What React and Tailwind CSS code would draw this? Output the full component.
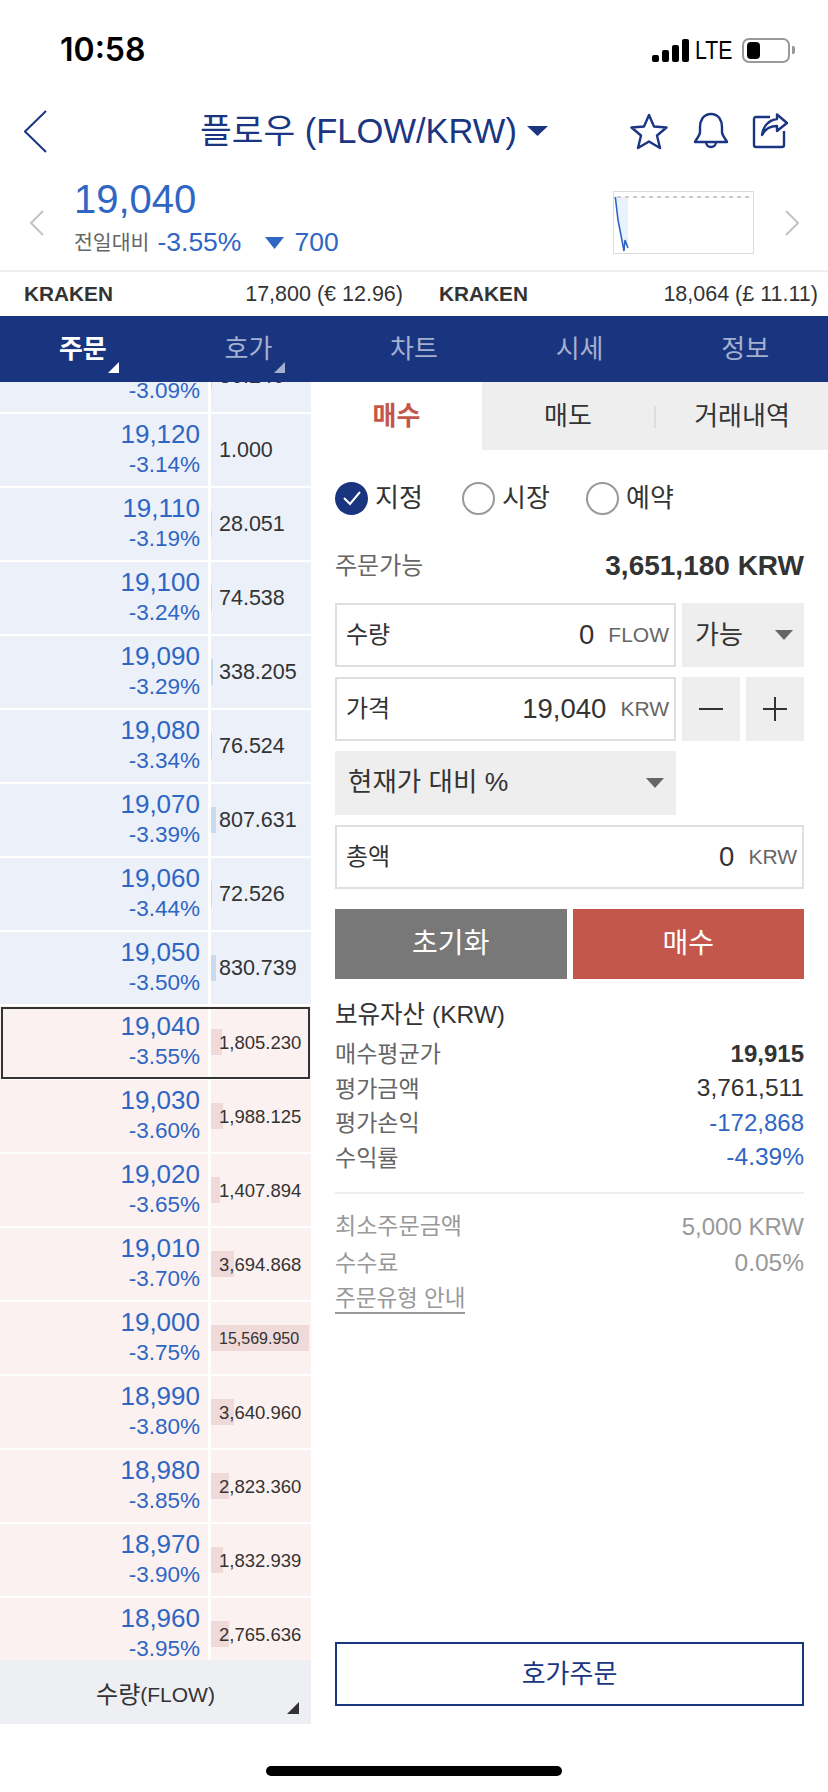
const askRows = [
  { price: '19,130', pct: '-3.09%', qty: '86.240', bar: 1 },
  { price: '19,120', pct: '-3.14%', qty: '1.000', bar: 0 },
  { price: '19,110', pct: '-3.19%', qty: '28.051', bar: 1 },
  { price: '19,100', pct: '-3.24%', qty: '74.538', bar: 1 },
  { price: '19,090', pct: '-3.29%', qty: '338.205', bar: 2 },
  { price: '19,080', pct: '-3.34%', qty: '76.524', bar: 1 },
  { price: '19,070', pct: '-3.39%', qty: '807.631', bar: 5 },
  { price: '19,060', pct: '-3.44%', qty: '72.526', bar: 1 },
  { price: '19,050', pct: '-3.50%', qty: '830.739', bar: 5 },
];

const bidRows = [
  { price: '19,040', pct: '-3.55%', qty: '1,805.230', bar: 11, current: true },
  { price: '19,030', pct: '-3.60%', qty: '1,988.125', bar: 12 },
  { price: '19,020', pct: '-3.65%', qty: '1,407.894', bar: 9 },
  { price: '19,010', pct: '-3.70%', qty: '3,694.868', bar: 23 },
  { price: '19,000', pct: '-3.75%', qty: '15,569.950', bar: 98 },
  { price: '18,990', pct: '-3.80%', qty: '3,640.960', bar: 23 },
  { price: '18,980', pct: '-3.85%', qty: '2,823.360', bar: 18 },
  { price: '18,970', pct: '-3.90%', qty: '1,832.939', bar: 12 },
  { price: '18,960', pct: '-3.95%', qty: '2,765.636', bar: 18 },
];

const tabs = ['주문', '호가', '차트', '시세', '정보'];

const Caret = ({ w = 18, h = 10, color = '#666666' }) => (
  <svg width={w} height={h} viewBox={`0 0 ${w} ${h}`} className="shrink-0">
    <polygon points={`0,0 ${w},0 ${w / 2},${h}`} fill={color} />
  </svg>
);

const Chevron = ({ dir = 'left', w = 14, h = 26, color = '#c4c4c4', stroke = 2 }) => (
  <svg width={w} height={h} viewBox={`0 0 ${w} ${h}`} fill="none" className="shrink-0">
    <polyline
      points={dir === 'left' ? `${w - 1},1 1,${h / 2} ${w - 1},${h - 1}` : `1,1 ${w - 1},${h / 2} 1,${h - 1}`}
      stroke={color}
      strokeWidth={stroke}
    />
  </svg>
);

const Corner = ({ color, className }) => (
  <svg width="11" height="11" viewBox="0 0 11 11" className={className}>
    <polygon points="11,0 11,11 0,11" fill={color} />
  </svg>
);

const OrderRow = ({ row, side }) => {
  const cellBg = side === 'ask' ? 'bg-[#ebf0f9]' : 'bg-[#fbf1f0]';
  const barBg = side === 'ask' ? 'bg-[#cbdbef]' : 'bg-[#f0d9d9]';
  const qtySize = row.qty.length > 9 ? 'text-[16px]' : row.qty.length > 7 ? 'text-[18.5px]' : 'text-[21.5px]';

  return (
    <div className="relative flex h-[72px] shrink-0 gap-[3px]">
      <div className={`flex w-[208px] flex-col items-end pt-[5px] pr-[8px] text-[#2f66c4] ${cellBg}`}>
        <div className="text-[26px] leading-[30px]">{row.price}</div>
        <div className="pt-[1px] text-[22.5px] leading-[30px]">{row.pct}</div>
      </div>
      <div className={`relative w-[100px] ${cellBg}`}>
        {row.bar > 0 && (
          <div className={`absolute top-[23px] left-0 h-[26px] ${barBg}`} style={{ width: row.bar }} />
        )}
        <div className={`relative flex h-full items-center pt-[1px] pl-[8px] text-[#333333] ${qtySize}`}>{row.qty}</div>
      </div>
      {row.current && <div className="absolute inset-x-[1px] top-[1px] -bottom-[1px] border-2 border-[#333333]" />}
    </div>
  );
};

const AmountField = ({ label, value, unit, className = '' }) => (
  <div className={`flex h-[64px] items-center border-2 border-[#dfdfdf] pr-[5px] pl-[9px] ${className}`}>
    <span className="text-[24px] text-[#333333]">{label}</span>
    <span className="ml-auto text-[27.5px] text-[#333333]">{value}</span>
    <span className="ml-[14px] text-[21px] text-[#666666]">{unit}</span>
  </div>
);

const InfoRow = ({ label, value, labelClass = 'text-[#666666]', valueClass = 'text-[#333333] text-[24.5px]', rowClass = 'h-[34.5px]' }) => (
  <div className={`flex items-center justify-between text-[23px] ${rowClass}`}>
    <span className={labelClass}>{label}</span>
    <span className={valueClass}>{value}</span>
  </div>
);

export default function App() {
  return (
    <div className="h-[1792px] w-[828px] overflow-hidden bg-white font-['Liberation_Sans','Noto_Sans_CJK_KR',sans-serif]">
      {/* status bar */}
      <div className="flex h-[100px] items-center pr-[33px] pl-[60px] text-black">
        <span className="font-['Inter',sans-serif] text-[32px] font-semibold">10:58</span>
        <div className="ml-auto flex items-center">
          <div className="flex items-end gap-[3px]">
            <div className="h-[7px] w-[7px] rounded-[2px] bg-black" />
            <div className="h-[12px] w-[7px] rounded-[2px] bg-black" />
            <div className="h-[17px] w-[7px] rounded-[2px] bg-black" />
            <div className="h-[23px] w-[7px] rounded-[2px] bg-black" />
          </div>
          <span className="ml-[6px] w-[38px] origin-left scale-x-[0.85] text-[25px] leading-none font-medium whitespace-nowrap">LTE</span>
          <div className="ml-[9px] flex h-[25px] w-[48px] items-center rounded-[7px] border-2 border-[#999999] pl-[3px]">
            <div className="h-[17px] w-[13px] rounded-[4px] bg-black" />
          </div>
          <div className="ml-[2px] h-[8px] w-[3px] rounded-r-[2px] bg-[#999999]" />
        </div>
      </div>

      {/* title row */}
      <div className="flex h-[62px] items-center pr-[40px] pl-[24px] text-[#1a3682]">
        <Chevron w={23} h={43} color="#1a3682" />
        <div className="ml-[153px] flex items-center gap-[10px]">
          <span className="text-[34.5px] leading-none whitespace-nowrap">플로우 (FLOW/KRW)</span>
          <Caret w={21} h={10} color="#1a3682" />
        </div>
        <div className="ml-auto flex items-center">
          <svg width="38" height="37" viewBox="0 0 38 37" fill="none" stroke="#1a3682" strokeWidth="2.4" strokeLinejoin="round">
            <polygon points="19,2 24,13.5 36.5,14.5 27,22.5 30,35 19,28.5 8,35 11,22.5 1.5,14.5 14,13.5" />
          </svg>
          <svg width="36" height="38" viewBox="0 0 36 38" fill="none" stroke="#1a3682" strokeWidth="2.4" className="ml-[25px]">
            <path d="M18 2C10 2 7 9 7 15V20C7 24 3 27 2 30H34C33 27 29 24 29 20V15C29 9 26 2 18 2Z" strokeLinejoin="round" />
            <path d="M13 30a5 5 0 0 0 10 0" />
          </svg>
          <svg width="36" height="36" viewBox="0 0 36 36" fill="none" stroke="#1a3682" strokeWidth="2.4" className="ml-[23px]">
            <path d="M18 4H4a2 2 0 0 0-2 2V32a2 2 0 0 0 2 2H30a2 2 0 0 0 2-2V18" />
            <path d="M25 1.5L35 10L25 18V13C18 13 13 16 10 22C11 13 17 7 25 6Z" strokeLinejoin="round" />
          </svg>
        </div>
      </div>

      {/* price summary */}
      <div className="flex h-[108px] items-start pr-[29px] pl-[30px]">
        <div className="mt-[48px]">
          <Chevron dir="left" />
        </div>
        <div className="ml-[30px] pt-[15px]">
          <div className="text-[40px] leading-[44px] text-[#2f66c4]">19,040</div>
          <div className="mt-[5px] flex h-[34px] items-center text-[#2f66c4]">
            <span className="text-[20.5px] text-[#666666]">전일대비</span>
            <span className="ml-[8px] text-[26.5px]">-3.55%</span>
            <span className="ml-[24px]">
              <Caret w={19} h={12} color="#2f66c4" />
            </span>
            <span className="ml-[10px] text-[26.5px]">700</span>
          </div>
        </div>
        <div className="relative mt-[29px] ml-auto h-[63px] w-[141px] border border-[#dcdcdc]">
          <svg width="139" height="62" viewBox="0 0 139 62" fill="none" className="absolute top-0 left-0">
            <polygon points="1,5 14,5 14,56 11,48 10,59 4,28" fill="#e8f2fc" />
            <line x1="3" y1="5" x2="136" y2="5" stroke="#cccccc" strokeWidth="2" strokeDasharray="4 4" />
            <polyline points="1.3,5 4,28 10,59 11,48 14,56" stroke="#2f66c4" strokeWidth="1.6" />
          </svg>
        </div>
        <div className="mt-[48px] ml-[31px]">
          <Chevron dir="right" />
        </div>
      </div>

      {/* exchange rates */}
      <div className="grid h-[46px] grid-cols-2 items-center gap-[36px] border-t-2 border-[#eeeeee] pr-[10px] pl-[24px] text-[21.5px] text-[#333333]">
        <div className="flex justify-between">
          <span className="text-[20.8px] font-bold">KRAKEN</span>
          <span>17,800 (€ 12.96)</span>
        </div>
        <div className="flex justify-between">
          <span className="text-[20.8px] font-bold">KRAKEN</span>
          <span>18,064 (£ 11.11)</span>
        </div>
      </div>

      {/* main tabs */}
      <div className="flex h-[66px] bg-[#19357f]">
        {tabs.map((tab, i) => (
          <div
            key={tab}
            className={`relative flex flex-1 items-center justify-center text-[26px] ${i === 0 ? 'font-bold text-white' : 'text-[#a5b0cf]'}`}
          >
            {tab}
            {i < 2 && (
              <Corner color={i === 0 ? '#ffffff' : '#a5b0cf'} className="absolute top-[46px] left-[108px]" />
            )}
          </div>
        ))}
      </div>

      <div className="flex h-[1342px]">
        {/* order book */}
        <div className="flex w-[311px] shrink-0 flex-col">
          <div className="h-[1278px] overflow-hidden">
            <div className="-mt-[42px] flex flex-col gap-[2px]">
              {askRows.map((row) => (
                <OrderRow key={row.price} row={row} side="ask" />
              ))}
              {bidRows.map((row) => (
                <OrderRow key={row.price} row={row} side="bid" />
              ))}
            </div>
          </div>
          <div className="relative flex h-[64px] items-center justify-center bg-[#eeeff3] pt-[5px] text-[#333333]">
            <span className="text-[24px]">수량</span>
            <span className="text-[21px]">(FLOW)</span>
            <Corner color="#333333" className="absolute right-[12px] bottom-[10px] h-[12px] w-[12px]" />
          </div>
        </div>

        {/* order form */}
        <div className="flex min-w-0 flex-1 flex-col">
          <div className="flex h-[68px] pt-[1px] text-[26px] text-[#333333]">
            <div className="flex w-[171px] items-center justify-center font-bold text-[#c3574b]">매수</div>
            <div className="-mt-[1px] flex flex-1 items-center bg-[#eeeeee] pt-[1px]">
              <div className="flex flex-1 items-center justify-center">매도</div>
              <div className="h-[22px] w-[2px] bg-[#dddddd]" />
              <div className="flex flex-1 items-center justify-center">거래내역</div>
            </div>
          </div>

          <div className="flex flex-1 flex-col px-[24px]">
            <div className="mt-[31px] flex h-[34px] items-center text-[26px] text-[#333333]">
              <div className="flex w-[127px] items-center gap-[7px]">
                <div className="flex h-[33px] w-[33px] items-center justify-center rounded-full bg-[#19357f]">
                  <svg width="20" height="16" viewBox="0 0 20 16" fill="none" stroke="white" strokeWidth="2">
                    <polyline points="2,8 8,14 18,2" />
                  </svg>
                </div>
                <span className="pt-[1px]">지정</span>
              </div>
              <div className="flex w-[124px] items-center gap-[7px]">
                <div className="h-[33px] w-[33px] rounded-full border-2 border-[#999999]" />
                <span className="pt-[1px]">시장</span>
              </div>
              <div className="flex items-center gap-[7px]">
                <div className="h-[33px] w-[33px] rounded-full border-2 border-[#999999]" />
                <span className="pt-[1px]">예약</span>
              </div>
            </div>

            <div className="mt-[34px] flex h-[34px] items-center justify-between">
              <span className="text-[24px] text-[#666666]">주문가능</span>
              <span className="text-[28px] font-bold text-[#333333]">3,651,180 KRW</span>
            </div>

            <div className="mt-[20px] flex flex-col gap-[10px]">
              <div className="flex gap-[6px]">
                <AmountField label="수량" value="0" unit="FLOW" className="w-[341px]" />
                <div className="flex h-[64px] flex-1 items-center justify-between bg-[#eeeeee] pr-[11px] pl-[13px] text-[26px] text-[#333333]">
                  가능
                  <Caret />
                </div>
              </div>
              <div className="flex gap-[6px]">
                <AmountField label="가격" value="19,040" unit="KRW" className="w-[341px]" />
                <div className="flex h-[64px] flex-1 items-center justify-center bg-[#eeeeee]">
                  <svg width="24" height="24" viewBox="0 0 24 24" stroke="#333333" strokeWidth="2">
                    <line x1="0" y1="12" x2="24" y2="12" />
                  </svg>
                </div>
                <div className="flex h-[64px] flex-1 items-center justify-center bg-[#eeeeee]">
                  <svg width="24" height="24" viewBox="0 0 24 24" stroke="#333333" strokeWidth="2">
                    <line x1="0" y1="12" x2="24" y2="12" />
                    <line x1="12" y1="0" x2="12" y2="24" />
                  </svg>
                </div>
              </div>
              <div className="flex h-[64px] w-[341px] items-center justify-between bg-[#eeeeee] pr-[12px] pl-[13px] text-[26.5px] text-[#333333]">
                현재가 대비 %
                <Caret />
              </div>
              <AmountField label="총액" value="0" unit="KRW" />
            </div>

            <div className="mt-[20px] flex h-[70px] gap-[6px] text-[28px] text-white">
              <div className="flex flex-1 items-center justify-center bg-[#787878]">초기화</div>
              <div className="flex flex-1 items-center justify-center bg-[#c3574b]">매수</div>
            </div>

            <div className="mt-[19px] flex h-[34px] items-center text-[24.5px] text-[#333333]">보유자산 (KRW)</div>
            <div className="mt-[5px]">
              <InfoRow label="매수평균가" value="19,915" valueClass="text-[24px] font-bold text-[#333333]" />
              <InfoRow label="평가금액" value="3,761,511" />
              <InfoRow label="평가손익" value="-172,868" valueClass="text-[24px] text-[#2f66c4]" />
              <InfoRow label="수익률" value="-4.39%" valueClass="text-[24.5px] text-[#2f66c4]" />
            </div>

            <div className="mt-[17px] h-[2px] bg-[#eeeeee]" />

            <div className="mt-[14px]">
              <InfoRow label="최소주문금액" value="5,000 KRW" labelClass="text-[#999999]" valueClass="text-[24px] text-[#999999]" rowClass="h-[37px]" />
              <InfoRow label="수수료" value="0.05%" labelClass="text-[#999999]" valueClass="text-[24.5px] text-[#999999]" rowClass="h-[37px]" />
              <div className="flex h-[36px] items-center">
                <span className="border-b-2 border-[#999999] text-[22.5px] leading-[26px] text-[#999999]">주문유형 안내</span>
              </div>
            </div>

            <div className="mt-auto mb-[18px] flex h-[64px] items-center justify-center border-2 border-[#1a3682] text-[26px] text-[#1a3682]">
              호가주문
            </div>
          </div>
        </div>
      </div>

      {/* home indicator */}
      <div className="flex justify-center pt-[42px]">
        <div className="h-[10px] w-[296px] rounded-full bg-black" />
      </div>
    </div>
  );
}
